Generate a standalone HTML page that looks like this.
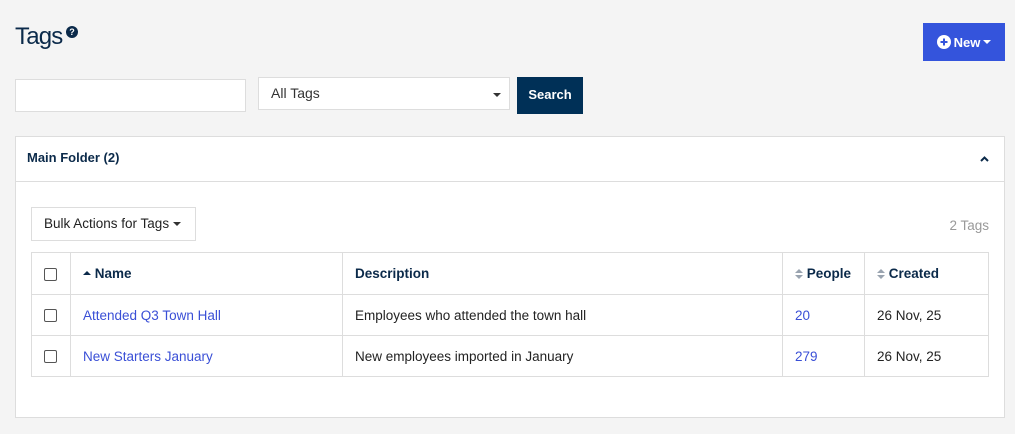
<!DOCTYPE html>
<html><head><style>
*{box-sizing:border-box;margin:0;padding:0}
body{width:1015px;height:434px;background:#f4f4f4;font-family:"Liberation Sans",sans-serif;font-size:13px;color:#222;position:relative;overflow:hidden}
.a{position:absolute}
h1{position:absolute;left:15px;top:23px;font-size:24px;font-weight:normal;color:#0b2a4a;letter-spacing:-0.8px}
.help{left:66px;top:26px;width:12px;height:12px;border-radius:50%;background:#0b2a4a;color:#fff;font-size:9px;font-weight:bold;text-align:center;line-height:12px}
.new{left:923px;top:23px;width:82px;height:38px;background:#3454dc;color:#fff;font-weight:bold;font-size:13px;display:flex;align-items:center;justify-content:center;gap:3px}
.inp{left:15px;top:79px;width:231px;height:33px;background:#fff;border:1px solid #ddd}
.sel{left:258px;top:77px;width:252px;height:33px;background:#fff;border:1px solid #ddd;padding:7px 12px;font-size:14px;color:#333}
.car{display:inline-block;width:0;height:0;border-left:4px solid transparent;border-right:4px solid transparent;border-top:4px solid #333;vertical-align:middle}
.srch{left:517px;top:77px;width:66px;height:37px;background:#003057;color:#fff;font-weight:bold;font-size:13px;text-align:center;line-height:36px}
.panel{left:15px;top:136px;width:990px;height:282px;background:#fff;border:1px solid #ddd}
.ph{position:absolute;left:0;top:0;width:100%;height:45px;border-bottom:1px solid #ddd;font-weight:bold;color:#0b2a4a;padding:13px 11px;font-size:13px}
.bulk{left:31px;top:207px;width:165px;height:34px;background:#fff;border:1px solid #ddd;padding:8px 12px;font-size:13.5px;color:#222}
.cnt{right:26px;top:218px;color:#999;font-size:13.5px}
table{position:absolute;left:31px;top:252px;width:958px;border-collapse:collapse;font-size:13.5px}
td,th{border:1px solid #ddd;height:41px;padding:0 12px;text-align:left;vertical-align:middle}
th{color:#0b2a4a;font-weight:bold;height:42px}
a{color:#3a4fd6;text-decoration:none}
.cb{display:inline-block;width:13px;height:13px;border:1px solid #555;border-radius:2px;vertical-align:middle}
svg{vertical-align:middle}
</style></head><body>
<h1>Tags</h1>
<div class="a help">?</div>
<div class="a new"><svg width="14" height="14" viewBox="0 0 14 14"><circle cx="7" cy="7" r="7" fill="#fff"/><path d="M7 3.5v7M3.5 7h7" stroke="#3454dc" stroke-width="2"/></svg>New <span class="car" style="border-top-color:#fff"></span></div>
<div class="a inp"></div>
<div class="a sel">All Tags<span class="car" style="position:absolute;right:8px;top:15px"></span></div>
<div class="a srch">Search</div>
<div class="a panel"><div class="ph">Main Folder (2)<svg class="a" style="right:15px;top:19px" width="9" height="6" viewBox="0 0 9 6"><path d="M1 5L4.5 1.5 8 5" stroke="#0b2a4a" stroke-width="2" fill="none"/></svg></div></div>
<div class="a bulk">Bulk Actions for Tags <span class="car"></span></div>
<div class="a cnt">2 Tags</div>
<table>
<tr><th style="width:39px"><span class="cb"></span></th><th style="width:272px"><svg width="8" height="10" viewBox="0 0 8 10"><path d="M0 6L4 2 8 6Z" fill="#0b2a4a"/></svg> Name</th><th style="width:440px">Description</th><th style="width:82px"><svg width="8" height="12" viewBox="0 0 8 12"><path d="M0 5L4 1 8 5ZM0 7L4 11 8 7Z" fill="#9aa4b0"/></svg> People</th><th><svg width="8" height="12" viewBox="0 0 8 12"><path d="M0 5L4 1 8 5ZM0 7L4 11 8 7Z" fill="#9aa4b0"/></svg> Created</th></tr>
<tr><td><span class="cb"></span></td><td><a>Attended Q3 Town Hall</a></td><td>Employees who attended the town hall</td><td><a>20</a></td><td>26 Nov, 25</td></tr>
<tr><td><span class="cb"></span></td><td><a>New Starters January</a></td><td>New employees imported in January</td><td><a>279</a></td><td>26 Nov, 25</td></tr>
</table>
</body></html>
